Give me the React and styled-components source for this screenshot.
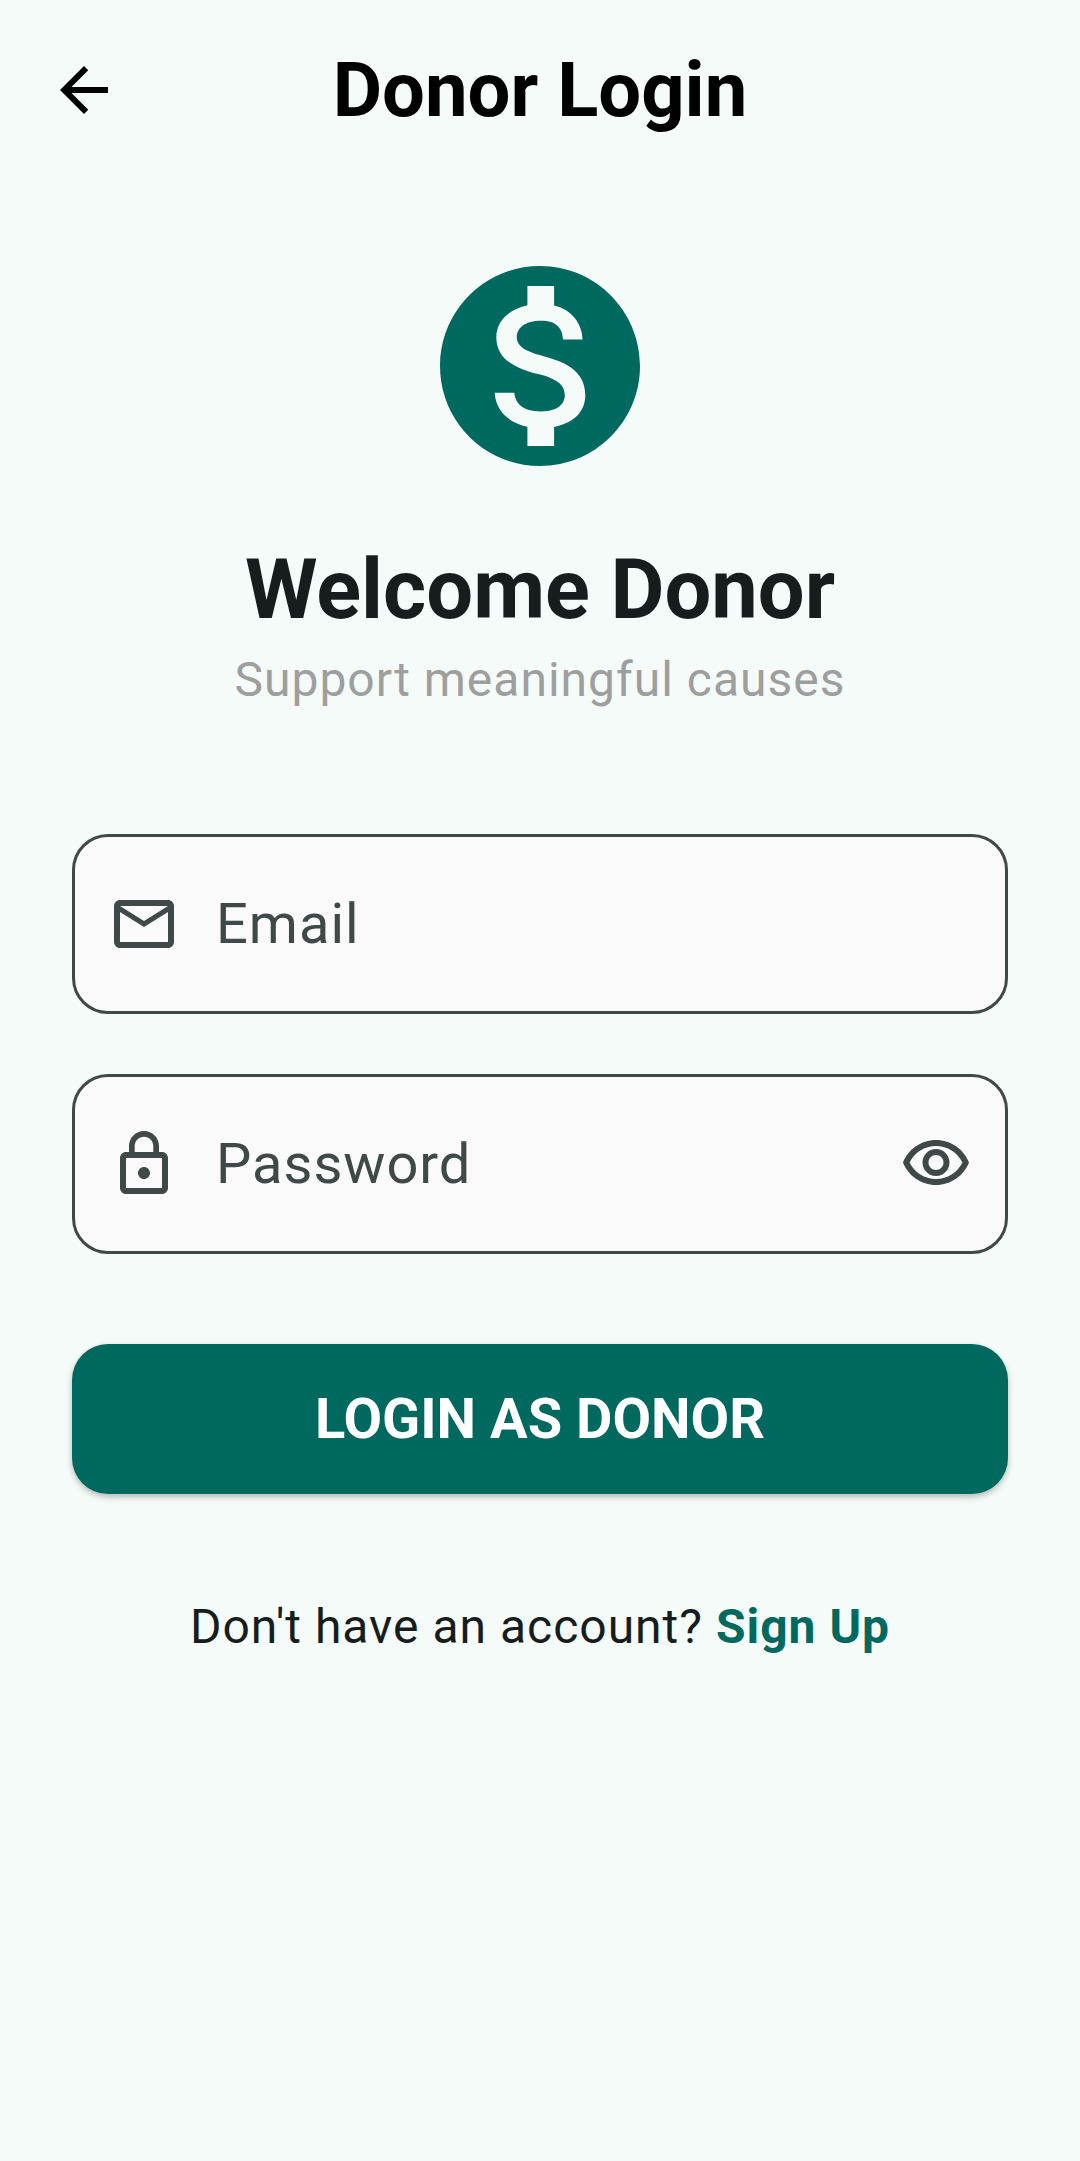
import React, { useState } from "react";
import styled, { createGlobalStyle } from "styled-components";

const colors = {
  background: "#f5fbf9",
  primary: "#00695f",
  text: "#171d1c",
  muted: "#9e9e9e",
  outline: "#3f4947",
  field: "#fafafa",
};

const GlobalStyle = createGlobalStyle`
  *, *::before, *::after { box-sizing: border-box; }
  body {
    margin: 0;
    background: ${colors.background};
    color: ${colors.text};
    font-family: Roboto, "Liberation Sans", sans-serif;
  }
  button, input { font: inherit; }
`;

const Screen = styled.div`
  display: flex;
  flex-direction: column;
  min-height: 100vh;
`;

const Header = styled.header`
  display: grid;
  grid-template-columns: 72px 1fr 72px;
  align-items: center;
  height: 180px;
  padding: 0 48px;
`;

const HeaderTitle = styled.h1`
  margin: 0;
  color: #000;
  font-size: 76px;
  font-weight: 700;
  line-height: 88px;
  text-align: center;
`;

const IconButton = styled.button`
  display: flex;
  flex: none;
  padding: 0;
  border: 0;
  background: none;
  color: ${(p) => p.$color};
  cursor: pointer;
`;

const Icon = styled.svg`
  display: block;
  flex: none;
  width: ${(p) => p.$size}px;
  height: ${(p) => p.$size}px;
  fill: currentColor;
`;

const Content = styled.main`
  display: flex;
  flex-direction: column;
  padding: 66px 72px;
`;

const Intro = styled.section`
  display: flex;
  flex-direction: column;
  align-items: center;
  margin-bottom: 126px;
  color: ${colors.primary};
  text-align: center;
`;

const Heading = styled.h2`
  margin: 54px 0 12px;
  color: ${colors.text};
  font-size: 83px;
  font-weight: 700;
  line-height: 100px;
`;

const Subtitle = styled.p`
  margin: 0;
  color: ${colors.muted};
  font-size: 48px;
  line-height: 56px;
  letter-spacing: 1px;
`;

const Form = styled.form`
  display: flex;
  flex-direction: column;
  gap: 60px;
`;

const Field = styled.div`
  display: flex;
  align-items: center;
  gap: 36px;
  height: 180px;
  padding: 0 33px;
  border: 3px solid ${colors.outline};
  border-radius: 36px;
  background: ${colors.field};
  color: ${colors.outline};
`;

const Input = styled.input`
  flex: 1;
  min-width: 0;
  height: 100%;
  padding: 0;
  border: 0;
  outline: 0;
  background: transparent;
  color: ${colors.text};
  font-size: 56px;
  letter-spacing: 1px;

  &::placeholder {
    color: ${colors.outline};
    opacity: 1;
  }
`;

const SubmitButton = styled.button`
  height: 150px;
  margin-top: 30px;
  border: 0;
  border-radius: 36px;
  background: ${colors.primary};
  color: #fff;
  font-size: 56px;
  font-weight: 700;
  box-shadow: 0 3px 6px rgba(0, 0, 0, 0.26);
  cursor: pointer;
`;

const Footer = styled.p`
  margin: 105px 0 0;
  font-size: 48px;
  line-height: 56px;
  letter-spacing: 1px;
  text-align: center;
`;

const SignUpLink = styled.a`
  color: ${colors.primary};
  font-weight: 700;
  text-decoration: none;
`;

const paths = {
  back: "M20 11H7.83l5.59-5.59L12 4l-8 8 8 8 1.41-1.41L7.83 13H20v-2z",
  dollar:
    "M12 2C6.48 2 2 6.48 2 12s4.48 10 10 10 10-4.48 10-10S17.52 2 12 2zm1.41 16.09V20h-2.67v-1.93c-1.71-.36-3.16-1.46-3.27-3.4h1.96c.1 1.05.82 1.87 2.65 1.87 1.96 0 2.4-.98 2.4-1.59 0-.83-.44-1.61-2.67-2.14-2.48-.6-4.18-1.62-4.18-3.67 0-1.72 1.39-2.84 3.11-3.21V4h2.67v1.95c1.86.45 2.79 1.86 2.85 3.39H14.3c-.05-1.11-.64-1.87-2.22-1.87-1.5 0-2.4.68-2.4 1.64 0 .84.65 1.39 2.67 1.91s4.18 1.39 4.18 3.91c-.02 1.83-1.38 2.83-3.12 3.16z",
  mail: "M20 4H4c-1.1 0-1.99.9-1.99 2L2 18c0 1.1.9 2 2 2h16c1.1 0 2-.9 2-2V6c0-1.1-.9-2-2-2zm0 14H4V8l8 5 8-5v10zm-8-7L4 6h16l-8 5z",
  lock: "M12 17c1.1 0 2-.9 2-2s-.9-2-2-2-2 .9-2 2 .9 2 2 2zm6-9h-1V6c0-2.76-2.24-5-5-5S7 3.24 7 6v2H6c-1.1 0-2 .9-2 2v10c0 1.1.9 2 2 2h12c1.1 0 2-.9 2-2V10c0-1.1-.9-2-2-2zM8.9 6c0-1.71 1.39-3.1 3.1-3.1s3.1 1.39 3.1 3.1v2H8.9V6zM18 20H6V10h12v10z",
  eye: "M12 6c3.79 0 7.17 2.13 8.82 5.5C19.17 14.87 15.79 17 12 17s-7.17-2.13-8.82-5.5C4.83 8.13 8.21 6 12 6m0-2C7 4 2.73 7.11 1 11.5 2.73 15.89 7 19 12 19s9.27-3.11 11-7.5C21.27 7.11 17 4 12 4zm0 5c1.38 0 2.5 1.12 2.5 2.5S13.38 14 12 14s-2.5-1.12-2.5-2.5S10.62 9 12 9m0-2c-2.48 0-4.5 2.02-4.5 4.5S9.52 16 12 16s4.5-2.02 4.5-4.5S14.48 7 12 7z",
};

function Glyph({ name, size = 72 }) {
  return (
    <Icon $size={size} viewBox="0 0 24 24" aria-hidden="true">
      <path d={paths[name]} />
    </Icon>
  );
}

export default function App() {
  const [showPassword, setShowPassword] = useState(false);

  return (
    <>
      <GlobalStyle />
      <Screen>
        <Header>
          <IconButton type="button" $color="#000" aria-label="Back">
            <Glyph name="back" />
          </IconButton>
          <HeaderTitle>Donor Login</HeaderTitle>
        </Header>
        <Content>
          <Intro>
            <Glyph name="dollar" size={240} />
            <Heading>Welcome Donor</Heading>
            <Subtitle>Support meaningful causes</Subtitle>
          </Intro>
          <Form onSubmit={(e) => e.preventDefault()}>
            <Field>
              <label htmlFor="email" aria-label="Email">
                <Glyph name="mail" />
              </label>
              <Input id="email" type="email" placeholder="Email" aria-label="Email" />
            </Field>
            <Field>
              <label htmlFor="password" aria-label="Password">
                <Glyph name="lock" />
              </label>
              <Input
                id="password"
                type={showPassword ? "text" : "password"}
                placeholder="Password"
                aria-label="Password"
              />
              <IconButton
                type="button"
                $color={colors.outline}
                aria-label="Toggle password visibility"
                onClick={() => setShowPassword((v) => !v)}
              >
                <Glyph name="eye" />
              </IconButton>
            </Field>
            <SubmitButton type="submit">LOGIN AS DONOR</SubmitButton>
          </Form>
          <Footer>
            Don't have an account? <SignUpLink href="#signup">Sign Up</SignUpLink>
          </Footer>
        </Content>
      </Screen>
    </>
  );
}
